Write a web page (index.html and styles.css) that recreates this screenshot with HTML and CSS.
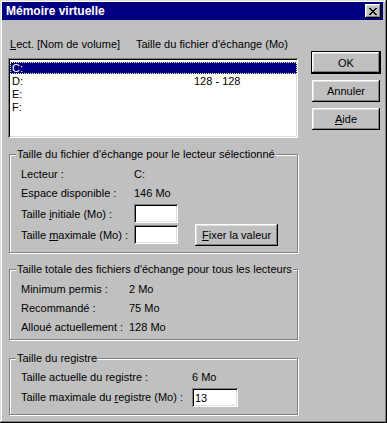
FILE: index.html
```html
<!DOCTYPE html>
<html lang="fr">
<head>
  <meta charset="UTF-8" />
  <title>Mémoire virtuelle</title>
  <link rel="stylesheet" href="styles.css">
</head>
<body>

  <div class="window">
    <div class="title-bar">
      <span class="title">Mémoire virtuelle</span>
      <span class="close-btn">
        <svg width="8" height="7" viewBox="0 0 8 7">
          <path d="M0 0h2v1h1v1h2v-1h1v-1h2v1h-1v1h-1v1h-1v1h1v1h1v1h1v1h-2v-1h-1v-1h-2v1h-1v1h-2v-1h1v-1h1v-1h1v-1h-1v-1h-1v-1h-1z" fill="#000"/>
        </svg>
      </span>
    </div>

    <div class="content">
      <div class="main-col">
        <div class="list-header">
          <span class="col-drive"><u>L</u>ect. [Nom de volume]</span>
          <span class="col-size">Taille du fichier d'échange (Mo)</span>
        </div>

        <div class="drive-list">
          <div class="drive-row selected"><span class="col-drive">C:</span><span class="col-size"></span></div>
          <div class="drive-row"><span class="col-drive">D:</span><span class="col-size">128 - 128</span></div>
          <div class="drive-row"><span class="col-drive">E:</span><span class="col-size"></span></div>
          <div class="drive-row"><span class="col-drive">F:</span><span class="col-size"></span></div>
        </div>

        <fieldset class="group group-drive">
          <legend>Taille du fichier d'échange pour le lecteur sélectionné</legend>
          <div class="info-row"><span class="label">Lecteur :</span><span>C:</span></div>
          <div class="info-row"><span class="label">Espace disponible :</span><span>146 Mo</span></div>
          <div class="field-row first-field">
            <span class="label">Taille <u>i</u>nitiale (Mo) :</span>
            <input type="text" class="field small">
          </div>
          <div class="field-row">
            <span class="label">Taille <u>m</u>aximale (Mo) :</span>
            <input type="text" class="field small">
            <button class="btn btn-set"><u>F</u>ixer la valeur</button>
          </div>
        </fieldset>

        <fieldset class="group group-total">
          <legend>Taille totale des fichiers d'échange pour tous les lecteurs</legend>
          <div class="info-row"><span class="label">Minimum permis :</span><span>2 Mo</span></div>
          <div class="info-row"><span class="label">Recommandé :</span><span>75 Mo</span></div>
          <div class="info-row"><span class="label">Alloué actuellement :</span><span>128 Mo</span></div>
        </fieldset>

        <fieldset class="group group-registry">
          <legend>Taille du registre</legend>
          <div class="info-row"><span class="label">Taille actuelle du registre :</span><span>6 Mo</span></div>
          <div class="field-row">
            <span class="label">Taille maximale du <u>r</u>egistre (Mo) :</span>
            <input type="text" class="field reg" value="13">
          </div>
        </fieldset>
      </div>

      <div class="button-col">
        <button class="btn btn-default">OK</button>
        <button class="btn">Annuler</button>
        <button class="btn"><u>A</u>ide</button>
      </div>
    </div>
  </div>

</body>
</html>
```

FILE: styles.css
```css
* {
  margin: 0;
  padding: 0;
  box-sizing: border-box;
}

html, body {
  height: 100%;
}

body {
  background: #c0c0c0;
  font-family: 'Liberation Sans', Arial, sans-serif;
  font-size: 11px;
  color: #000;
}

u {
  text-decoration: underline;
}

.window {
  width: 387px;
  height: 423px;
  padding: 2px 4px 3px 2px;
  background: #c0c0c0;
  box-shadow: inset -1px -1px 0 #000, inset 1px 1px 0 #dfdfdf,
              inset -2px -2px 0 #808080, inset 2px 2px 0 #fff;
}

/* title */
.title-bar {
  height: 18px;
  background: #000080;
  display: flex;
  align-items: center;
  justify-content: space-between;
  padding: 0 2px 0 4px;
}

.title {
  color: #fff;
  font-weight: bold;
  font-size: 12px;
}

.close-btn {
  width: 16px;
  height: 14px;
  background: #c0c0c0;
  display: flex;
  align-items: center;
  justify-content: center;
  box-shadow: inset -1px -1px 0 #000, inset 1px 1px 0 #fff,
              inset -2px -2px 0 #808080, inset 2px 2px 0 #dfdfdf;
}

/* body */
.content {
  display: flex;
  padding: 18px 0 0 6px;
}

.main-col {
  width: 290px;
}

.button-col {
  display: flex;
  flex-direction: column;
  gap: 6px;
  margin: 13px 0 0 14px;
}

/* list */
.list-header {
  display: flex;
  height: 13px;
  line-height: 13px;
  padding-left: 2px;
}

.col-drive {
  width: 126px;
}

.drive-list {
  margin-top: 7px;
  height: 80px;
  background: #fff;
  padding: 4px 1px 0 2px;
  box-shadow: inset 1px 1px 0 #808080, inset -1px -1px 0 #fff,
              inset 2px 2px 0 #000, inset -2px -2px 0 #dfdfdf;
}

.drive-row {
  display: flex;
  height: 13px;
  line-height: 11px;
  padding: 1px 0 0 2px;
}

.drive-row .col-drive {
  width: 182px;
}

.drive-row.selected {
  background: #000080;
  color: #fff;
  outline: 1px dotted #ffff80;
  outline-offset: -1px;
  height: 12px;
  margin-bottom: 1px;
}

/* group boxes */
.group {
  border: 1px solid #808080;
  box-shadow: 1px 1px 0 #fff, inset 1px 1px 0 #fff;
  margin: 10px 0 0 1px;
  padding: 0 0 0 11px;
  width: 289px;
}

.group legend {
  margin-left: -5px;
  padding: 0 1px;
  height: 13px;
  line-height: 13px;
  background: #c0c0c0;
}

.info-row,
.field-row {
  display: flex;
  align-items: center;
}

.info-row {
  height: 19px;
}

.group-drive .label {
  width: 113px;
}

.group-total .label {
  width: 108px;
}

.group-registry .label {
  width: 171px;
}

.group-drive {
  padding-top: 3px;
  height: 105px;
}

.group-drive .first-field {
  margin-top: 1px;
}

.group-drive .field-row {
  height: 21px;
}

.group-total {
  padding-top: 3px;
  height: 77px;
}

.group-registry {
  margin-top: 12px;
  padding-top: 2px;
  height: 63px;
}

.group-registry .field-row {
  height: 22px;
}

.field {
  height: 19px;
  border: none;
  outline: none;
  background: #fff;
  font-family: inherit;
  font-size: 11px;
  padding: 2px 3px 0;
  box-shadow: inset 1px 1px 0 #808080, inset -1px -1px 0 #fff,
              inset 2px 2px 0 #000, inset -2px -2px 0 #dfdfdf;
}

.field.small {
  width: 44px;
}

.field.reg {
  width: 46px;
}

/* buttons */
.btn {
  width: 68px;
  height: 22px;
  border: none;
  background: #c0c0c0;
  font-family: inherit;
  font-size: 11px;
  font-weight: normal;
  color: #000;
  cursor: pointer;
  box-shadow: inset -1px -1px 0 #000, inset 1px 1px 0 #fff,
              inset -2px -2px 0 #808080, inset 2px 2px 0 #dfdfdf;
}

.btn-default {
  width: 70px;
  height: 23px;
  border: 1px solid #000;
  margin-left: -1px;
}

.btn-set {
  width: 83px;
  margin: 1px 0 0 17px;
}
```
